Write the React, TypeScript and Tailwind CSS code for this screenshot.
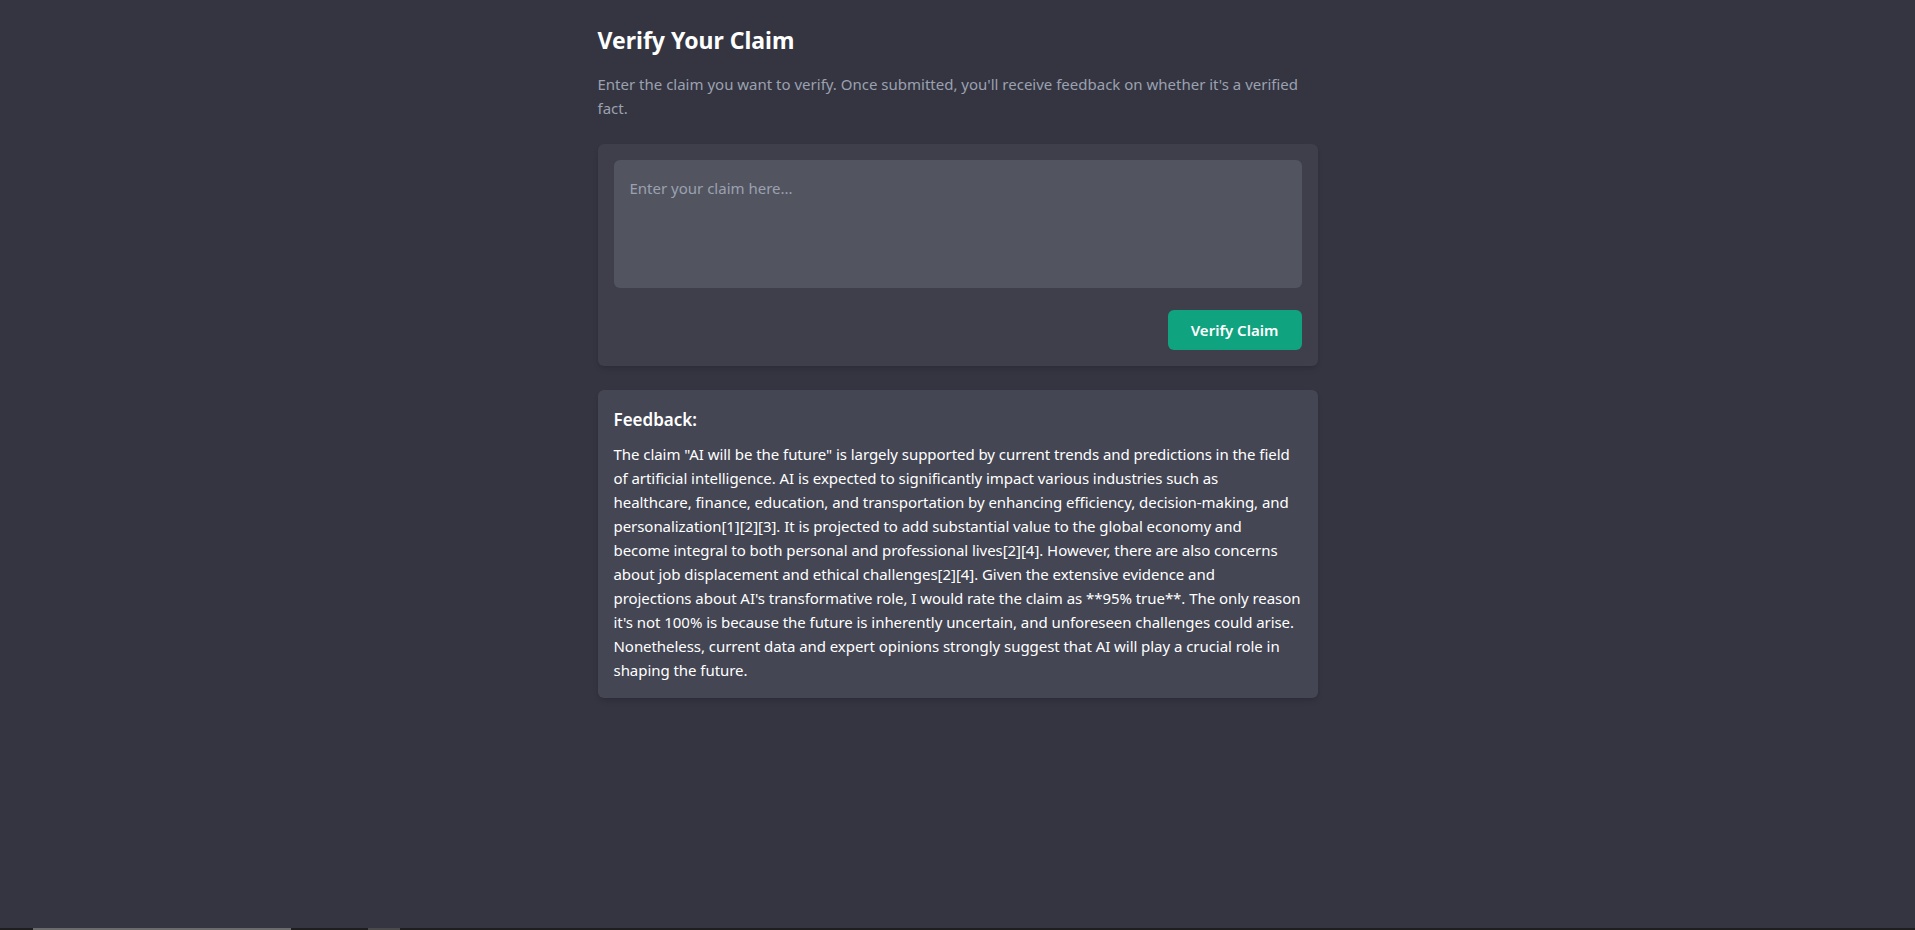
import { useState } from "react";

// line breaks follow the original rendering
const feedbackLines = [
  "The claim \"AI will be the future\" is largely supported by current trends and predictions in the field",
  "of artificial intelligence. AI is expected to significantly impact various industries such as",
  "healthcare, finance, education, and transportation by enhancing efficiency, decision-making, and",
  "personalization[1][2][3]. It is projected to add substantial value to the global economy and",
  "become integral to both personal and professional lives[2][4]. However, there are also concerns",
  "about job displacement and ethical challenges[2][4]. Given the extensive evidence and",
  "projections about AI's transformative role, I would rate the claim as **95% true**. The only reason",
  "it's not 100% is because the future is inherently uncertain, and unforeseen challenges could arise.",
  "Nonetheless, current data and expert opinions strongly suggest that AI will play a crucial role in",
  "shaping the future.",
];

export default function App() {
  const [claim, setClaim] = useState("");

  return (
    <div className="min-h-screen h-[930px] flex flex-col bg-[#343541] text-white font-['Segoe_UI','Noto_Sans',sans-serif] overflow-hidden">
      <div className="flex-1">
        <div className="max-w-3xl mx-auto px-6 py-6">
          <h1 className="text-[23px] leading-8 font-bold mb-4">Verify Your Claim</h1>
          <p className="text-[15px] leading-6 text-[#9ba1b0] mb-6">
            Enter the claim you want to verify. Once submitted, you'll receive
            feedback on whether it's a verified fact.
          </p>

          <div className="bg-[#3e3f4b] rounded-md p-4 shadow-md">
            <textarea
              value={claim}
              onChange={(e) => setClaim(e.target.value)}
              placeholder="Enter your claim here..."
              className="block w-full h-32 p-4 rounded-md bg-[#525560] text-[15px] leading-6 text-white placeholder:text-[#9ba1b0] resize-none outline-none"
            />
            <div className="flex justify-end mt-[22px]">
              <button className="h-10 w-[134px] rounded-md bg-[#10a37f] text-[15px] font-semibold text-white">
                Verify Claim
              </button>
            </div>
          </div>

          <div className="mt-6 bg-[#444654] rounded-md p-4 shadow-md">
            <h2 className="text-[17px] leading-7 font-semibold mb-2">Feedback:</h2>
            <p className="text-[15px] leading-6 tracking-[-0.05px]">
              {feedbackLines.map((line, i) => (
                <span key={i} className="block whitespace-nowrap">
                  {line}
                </span>
              ))}
            </p>
          </div>
        </div>
      </div>
      <div className="h-[2px] bg-[#1e1e1e] flex">
        <div className="ml-[33px] w-[258px] bg-[#6b6b6b]" />
        <div className="ml-[77px] w-[32px] bg-[#4a4a4a]" />
      </div>
    </div>
  );
}
